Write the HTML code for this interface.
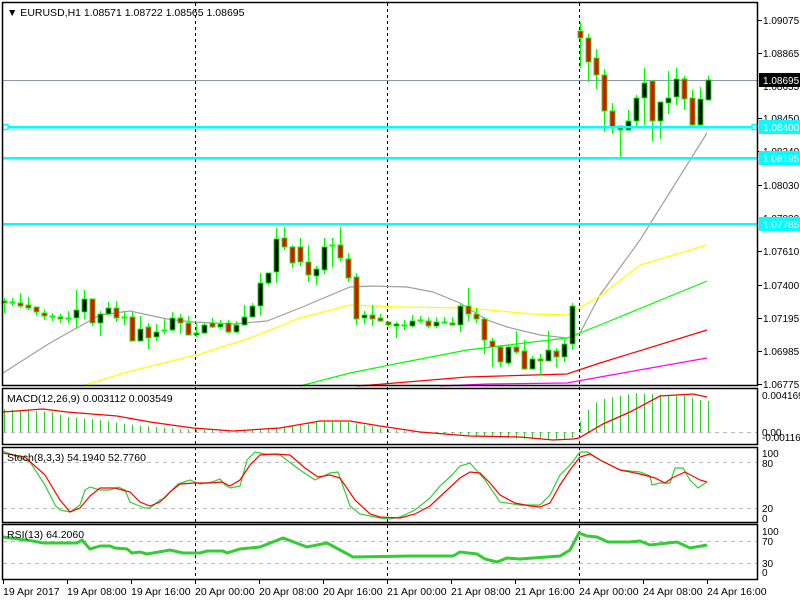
<!DOCTYPE html>
<html><head><meta charset="utf-8"><style>
html,body{margin:0;padding:0;background:#fff;}
svg{display:block;font-family:"Liberation Sans",sans-serif;font-size:10.5px;}
.ax{font-size:10px;}
</style></head><body>
<svg id="s" width="800" height="600" viewBox="0 0 800 600" xmlns="http://www.w3.org/2000/svg">
<rect width="800" height="600" fill="#fff"/>
<g id="grid" stroke="#000" stroke-width="1" stroke-dasharray="3,3">
<line x1="195.5" y1="3" x2="195.5" y2="579"/>
<line x1="387.5" y1="3" x2="387.5" y2="579"/>
<line x1="579.5" y1="3" x2="579.5" y2="579"/>
</g>
<g stroke="#bbb" stroke-dasharray="4,4">
<line x1="3" y1="432.5" x2="757" y2="432.5"/>
<line x1="3" y1="462.5" x2="757" y2="462.5"/>
<line x1="3" y1="508.5" x2="757" y2="508.5"/>
<line x1="3" y1="541.5" x2="757" y2="541.5"/>
<line x1="3" y1="563.5" x2="757" y2="563.5"/>
</g>
<line x1="3" y1="80.5" x2="757" y2="80.5" stroke="#8899aa"/>
<g fill="none" stroke-width="1.2">
<polyline stroke="#a0a0a0" points="3,373 50,343 100,315 130,311 167,319 193,322 233,324 267,321 300,308 350,287 373,286 407,287 433,292 460,303 487,320 507,327 540,335 567,338 580,333 600,295 640,240 707,133"/>
<polyline stroke="#ffff00" points="85,385 127,372 200,354 250,338 300,318 350,305 400,307 467,308 533,314 567,315 600,296 640,265 707,245"/>
<polyline stroke="#00ff00" points="300,386 350,373 400,363 467,350 533,342 567,338 600,325 707,281"/>
<polyline stroke="#ff0000" points="357,386 383,384 467,377 500,376 567,374 600,363 707,330"/>
<polyline stroke="#ff00ff" points="440,386 487,384 567,383 600,377 707,358"/>
</g>
<g id="candles"></g>
<g fill="#00ffff">
<rect x="3" y="126" width="754" height="2.5"/>
<rect x="3" y="157" width="754" height="2.5"/>
<rect x="3" y="223" width="754" height="2.5"/>
</g>
<rect x="3" y="124.5" width="5" height="5" fill="#fff" stroke="#00ffff" stroke-width="1.5"/>
<rect x="752" y="124.5" width="5" height="5" fill="#fff" stroke="#00ffff" stroke-width="1.5"/>
<g id="macd" stroke="#33cc33" stroke-width="1"></g>
<polyline fill="none" stroke="#ff0000" stroke-width="1.3" points="3,412 43,409 67,412 117,416 150,422 193,428 233,431 280,428 320,421 350,421 380,426 420,432 470,436 520,437 553,440 573,439 579,438 603,424 630,412 660,396 693,394 707,397"/>
<polyline fill="none" stroke="#33cc33" stroke-width="1.2" points="3,451 30,462 45,485 55,505 60,510 70,512 80,505 85,490 90,487 100,490 110,490 118,487 125,490 130,502 137,505 145,508 150,508 160,500 165,498 172,490 178,484 190,480 200,484 212,482 220,479 225,485 230,488 240,486 247,460 255,452 265,454 280,455 300,470 315,480 330,473 338,472 350,506 360,514 380,518 390,519 400,517 415,510 430,498 440,486 452,475 460,466 470,463 485,480 500,502 520,505 540,505 550,495 560,475 570,465 580,452 588,452 600,460 620,470 640,472 650,476 652,485 660,483 670,483 675,468 683,468 690,480 698,488 707,482"/>
<polyline fill="none" stroke="#ff0000" stroke-width="1.2" points="3,453 25,457 45,475 60,500 70,512 80,508 90,496 100,488 115,488 130,492 140,502 150,506 160,502 170,492 180,484 195,483 210,483 222,482 230,486 240,480 250,465 260,455 275,454 290,455 305,468 318,477 330,475 340,478 355,500 370,514 380,517 400,518 415,514 430,506 445,492 460,478 470,472 480,473 490,483 500,495 515,503 530,506 540,507 550,503 560,485 570,470 580,457 590,454 600,460 620,470 640,474 655,478 665,483 672,478 685,472 700,480 707,482"/>
<polyline fill="none" stroke="#33cc33" stroke-width="3" points="3,537 33,541 43,543 77,543 82,540 90,549 100,546 110,546 115,548 127,549 132,553 140,552 147,554 170,550 183,553 200,553 207,551 223,551 227,553 240,549 260,547 283,538 307,547 327,543 353,557 410,556 453,556 460,552 477,554 485,559 497,562 507,558 520,559 533,558 560,556 570,550 579,533 587,536 597,537 608,542 630,542 640,541 650,545 677,542 690,548 707,545"/>
<g fill="none" stroke="#000" stroke-width="1.5">
<rect x="2.5" y="2.5" width="755" height="383"/>
<rect x="2.5" y="388.5" width="755" height="56"/>
<rect x="2.5" y="447.5" width="755" height="75"/>
<rect x="2.5" y="524.5" width="755" height="55"/>
</g>
<g stroke="#000">
<line x1="758" y1="20.5" x2="762" y2="20.5"/><line x1="758" y1="53.5" x2="762" y2="53.5"/><line x1="758" y1="118.5" x2="762" y2="118.5"/><line x1="758" y1="151.5" x2="762" y2="151.5"/><line x1="758" y1="185.5" x2="762" y2="185.5"/><line x1="758" y1="251.5" x2="762" y2="251.5"/><line x1="758" y1="285.5" x2="762" y2="285.5"/><line x1="758" y1="318.5" x2="762" y2="318.5"/><line x1="758" y1="351.5" x2="762" y2="351.5"/><line x1="758" y1="384.5" x2="762" y2="384.5"/>
<line x1="3.5" y1="580" x2="3.5" y2="584"/><line x1="67.5" y1="580" x2="67.5" y2="584"/><line x1="131.5" y1="580" x2="131.5" y2="584"/><line x1="195.5" y1="580" x2="195.5" y2="584"/><line x1="259.5" y1="580" x2="259.5" y2="584"/><line x1="323.5" y1="580" x2="323.5" y2="584"/><line x1="387.5" y1="580" x2="387.5" y2="584"/><line x1="451.5" y1="580" x2="451.5" y2="584"/><line x1="515.5" y1="580" x2="515.5" y2="584"/><line x1="579.5" y1="580" x2="579.5" y2="584"/><line x1="643.5" y1="580" x2="643.5" y2="584"/><line x1="707.5" y1="580" x2="707.5" y2="584"/>
</g>
<g fill="#000" class="ax">
<text x="763" y="24">1.09075</text>
<text x="763" y="57">1.08865</text>
<text x="763" y="90">1.08655</text>
<text x="763" y="122">1.08450</text>
<text x="763" y="155">1.08240</text>
<text x="763" y="189">1.08030</text>
<text x="763" y="222">1.07820</text>
<text x="763" y="255">1.07610</text>
<text x="763" y="289">1.07400</text>
<text x="763" y="322">1.07195</text>
<text x="763" y="355">1.06985</text>
<text x="763" y="388">1.06775</text>
</g>
<rect x="759" y="73" width="41" height="14" fill="#000"/>
<text x="763" y="84" fill="#fff" class="ax">1.08695</text>
<g fill="#00ffff"><rect x="759" y="120" width="41" height="14"/><rect x="759" y="151" width="41" height="14"/><rect x="759" y="217" width="41" height="14"/></g>
<g fill="#fff" class="ax"><text x="763" y="131">1.08400</text><text x="763" y="162">1.08195</text><text x="763" y="228">1.07785</text></g>
<g fill="#000" class="ax">
<text x="762" y="399">0.004169</text>
<text x="762" y="436">0.00</text>
<text x="762" y="441">-0.001161</text>
<text x="762" y="457">100</text>
<text x="762" y="467">80</text>
<text x="762" y="512">20</text>
<text x="762" y="522">0</text>
<text x="762" y="535">100</text>
<text x="762" y="545">70</text>
<text x="762" y="567">30</text>
<text x="762" y="576">0</text>
</g>
<g fill="#000">
<text x="7" y="16">▼ EURUSD,H1  1.08571 1.08722 1.08565 1.08695</text>
<text x="7" y="402">MACD(12,26,9) 0.003112 0.003549</text>
<text x="7" y="461">Stoch(8,3,3) 54.1940 52.7760</text>
<text x="7" y="538">RSI(13) 64.2060</text>
<text x="3" y="595">19 Apr 2017</text>
<text x="67" y="595">19 Apr 08:00</text>
<text x="131" y="595">19 Apr 16:00</text>
<text x="195" y="595">20 Apr 00:00</text>
<text x="259" y="595">20 Apr 08:00</text>
<text x="323" y="595">20 Apr 16:00</text>
<text x="387" y="595">21 Apr 00:00</text>
<text x="451" y="595">21 Apr 08:00</text>
<text x="515" y="595">21 Apr 16:00</text>
<text x="579" y="595">24 Apr 00:00</text>
<text x="643" y="595">24 Apr 08:00</text>
<text x="707" y="595">24 Apr 16:00</text>
</g>
</svg>
<script>
var C=[[301,303,298,313],[302,303,298,306],[303,306,293,308],[305,308,297,310],[307,312,307,315],[313,316,309,320],[316,317,313,321],[317,319,314,323],[318,319,311,323],[318,310,290,328],[312,299,290,319],[299,323,299,326],[323,314,311,336],[314,308,302,315],[308,318,301,322],[317,318,311,325],[317,341,312,341],[341,329,316,341],[327,338,323,349],[337,332,324,341],[331,330,319,334],[330,318,312,331],[318,323,314,334],[323,335,316,335],[335,333,323,337],[333,325,323,334],[323,327,318,328],[327,324,320,329],[323,332,320,333],[332,325,321,333],[325,317,305,325],[317,306,303,316],[306,283,273,316],[283,273,273,285],[272,239,228,283],[238,247,227,250],[247,263,245,268],[247,262,238,266],[262,275,245,282],[276,269,266,285],[270,247,238,274],[245,245,238,267],[245,258,227,261],[259,278,253,282],[277,319,273,325],[318,315,311,324],[315,319,305,326],[318,321,314,322],[322,325,321,327],[326,324,322,338],[325,325,320,330],[326,321,315,327],[320,320,316,323],[321,326,317,328],[326,322,317,328],[322,322,317,324],[323,325,317,326],[325,306,304,332],[306,314,288,321],[314,319,308,323],[319,340,317,354],[341,347,338,367],[347,362,345,367],[363,347,345,365],[347,352,331,354],[351,369,340,370],[369,359,356,370],[359,361,354,376],[361,350,331,361],[351,357,348,367],[357,344,340,362],[344,306,303,350],[31,38,22,68],[38,62,34,82],[58,75,49,89],[75,111,69,132],[111,127,103,134],[126,130,126,159],[130,121,110,131],[121,98,95,126],[98,83,68,125],[81,121,81,141],[121,102,102,139],[103,98,71,114],[97,79,68,105],[79,99,76,110],[98,125,90,126],[125,99,87,126],[100,80,76,100]];
var g='',m='';
var mp=[[3,409],[52,412],[67,417],[100,420],[133,425],[180,429],[230,431],[280,427],[320,421],[350,422],[390,430],[440,433],[470,435],[500,438],[560,440],[571,440],[579,423],[587,411],[595,403],[603,399],[619,396],[635,393],[667,395],[683,395],[699,400],[707,401]];
function mi(x){for(var k=1;k<mp.length;k++){if(x<=mp[k][0]){var a=mp[k-1],b=mp[k];return a[1]+(b[1]-a[1])*(x-a[0])/(b[0]-a[0]);}}return 401;}
for(var i=0;i<C.length;i++){var c=C[i],x=4+8*i;var xc=x+0.5;
g+='<line x1="'+xc+'" y1="'+c[2]+'" x2="'+xc+'" y2="'+c[3]+'" stroke="#00ff00" stroke-width="1"/>';
var t=Math.min(c[0],c[1]),h=Math.max(Math.abs(c[1]-c[0]),1);
var f=c[1]>c[0]?'#ff0000':(c[1]<c[0]?'#000':'#00ff00');
g+='<rect x="'+(x-2)+'" y="'+t+'" width="5" height="'+h+'" fill="'+f+'" stroke="#00ff00" stroke-width="1"/>';
var y=mi(x);m+='<line x1="'+xc+'" y1="432" x2="'+xc+'" y2="'+y.toFixed(1)+'"/>';}
document.getElementById('candles').innerHTML=g;document.getElementById('macd').innerHTML=m;
</script>
</body></html>
